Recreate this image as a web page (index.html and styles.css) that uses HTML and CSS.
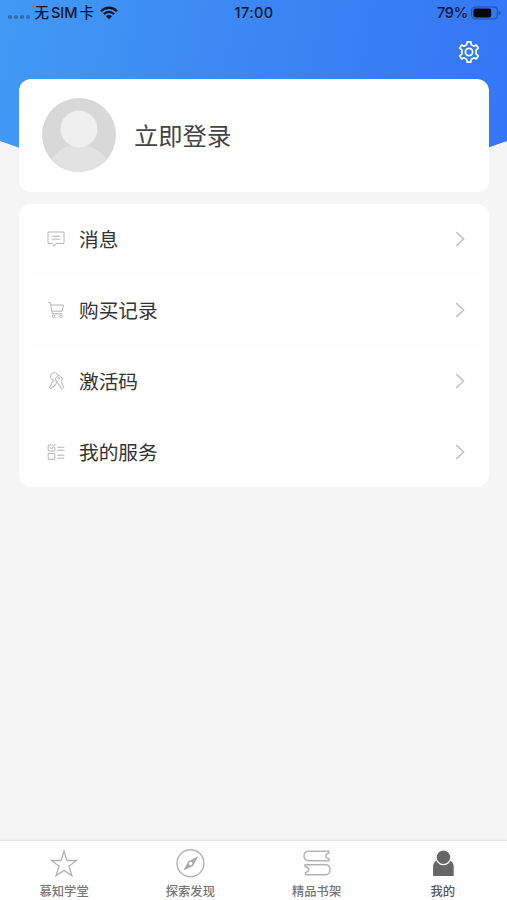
FILE: index.html
```
<!DOCTYPE html>
<html lang="zh-CN">
<head>
    <meta charset="UTF-8">
    <meta name="viewport" content="width=device-width, initial-scale=1.0">
    <title>我的</title>
    <link rel="stylesheet" href="styles.css">
</head>
<body>
    <header class="hero">
        <div class="status-bar">
            <div class="status-left">
                <span class="signal"><i></i><i></i><i></i><i></i></span>
                <span class="carrier">无<b>SIM</b>卡</span>
                <svg class="wifi" viewBox="0 0 18 14" width="18" height="14">
                    <path d="M1 5.200C5.500 .6 12.500 .6 17 5.200M3.900 8.100C6.800 5.200 11.200 5.200 14.100 8.100" fill="none" stroke="#07162d" stroke-width="2.300"/>
                    <path d="M5.900 10.200C7.800 8.500 10.200 8.500 12.100 10.200L9 13.300Z" fill="#07162d"/>
                </svg>
            </div>
            <div class="status-time">17:00</div>
            <div class="status-right">
                <span>79%</span>
                <svg width="30" height="14" viewBox="0 0 30 14">
                    <rect x=".7" y="1" width="25.600" height="12" rx="3.500" fill="none" stroke="#245293" stroke-width="1.100"/>
                    <rect x="2.500" y="2.600" width="17.700" height="8.800" rx="1.800" fill="#02060e"/>
                    <path d="M27.800 5v4q2-.6 2-2t-2-2z" fill="#245293"/>
                </svg>
            </div>
        </div>
        <div class="toolbar">
            <svg class="gear" viewBox="0 0 24 24" width="24" height="24">
                <path d="M9.700 4.700 10.200 1.800h3.600l.5 2.900q1.300.5 2.400 1.400l2.800-1 1.800 3.100-2.300 1.900q.3 1.900 0 3.800l2.300 1.900-1.800 3.100-2.800-1q-1.100.9-2.400 1.400l-.5 2.900h-3.600l-.5-2.900q-1.300-.5-2.400-1.400l-2.800 1-1.800-3.100L5 13.900q-.3-1.900 0-3.800L2.700 8.200l1.800-3.100 2.800 1q1.100-.9 2.400-1.400z"/>
                <circle cx="12" cy="12" r="3.600"/>
            </svg>
        </div>
    </header>
    <main>
        <section class="card profile">
            <svg class="avatar" viewBox="0 0 74 74" width="74" height="74">
                <defs><clipPath id="avatar-clip"><circle cx="37" cy="37" r="37"/></clipPath></defs>
                <g clip-path="url(#avatar-clip)">
                    <rect width="74" height="74" fill="#d8d8d8"/>
                    <circle cx="37" cy="79" r="32.500" fill="#e2e2e2"/>
                    <circle cx="37" cy="31" r="18.500" fill="#efefef"/>
                </g>
            </svg>
            <span class="login">立即登录</span>
        </section>
        <nav class="card menu">
            <a class="menu-item">
                <svg class="menu-icon" viewBox="0 0 18 18">
                    <path d="M2 2h14q1 0 1 1v9.500q0 1-1 1H9.200L7 16l-1.500-2.500H2q-1 0-1-1V3q0-1 1-1zM4.800 6.200h8.400M4.800 9.200h8.400"/>
                </svg>
                <span class="label">消息</span>
                <svg class="arrow" viewBox="0 0 10 16"><path d="M1.300 1.200 8.600 8l-7.300 6.800"/></svg>
            </a>
            <a class="menu-item">
                <svg class="menu-icon" viewBox="0 0 18 18">
                    <path d="M1 1.500h2.200L5.400 12.800H15M3.800 4h12.700l-1.400 6.200H5"/>
                    <circle cx="6.500" cy="15.300" r="1.300"/><circle cx="14" cy="15.300" r="1.300"/>
                </svg>
                <span class="label">购买记录</span>
                <svg class="arrow" viewBox="0 0 10 16"><path d="M1.300 1.200 8.600 8l-7.300 6.800"/></svg>
            </a>
            <a class="menu-item no-line">
                <svg class="menu-icon" viewBox="0 0 18 18">
                    <path d="M6.500 8.200A3.800 3.800 0 1 1 10.900 3.300M6.600 8 2.400 15.800l1.800 1 1.200-2 1.500.1.300-1.800 1.300-.3 1.200-2.800M9 9A3.400 3.400 0 1 1 14.300 9.500L16.800 15.400l-1.300 1.500-1.600-.9-.8-1.900-1.300-.4.100-1.500-1.300-.8-.4-1.800z"/>
                    <circle cx="11.800" cy="6.300" r=".8"/>
                </svg>
                <span class="label">激活码</span>
                <svg class="arrow" viewBox="0 0 10 16"><path d="M1.300 1.200 8.600 8l-7.300 6.800"/></svg>
            </a>
            <a class="menu-item no-line">
                <svg class="menu-icon" viewBox="0 0 18 18">
                    <path d="M7.800 4v4H1.200V2h5M2.800 4.200l1.900 2L8.300 1M1.200 10.400h6.600v6H1.200zM10.300 4.300h7M10.300 7.300h7M10.300 12.200h7M10.300 15.200h7"/>
                </svg>
                <span class="label">我的服务</span>
                <svg class="arrow" viewBox="0 0 10 16"><path d="M1.300 1.200 8.600 8l-7.300 6.800"/></svg>
            </a>
        </nav>
    </main>
    <footer class="tab-bar">
        <a class="tab">
            <svg viewBox="0 0 30 30"><path d="M15 2.200 18 11.500H27.400L19.900 17.200 22.800 26.600 15 21.300 7.200 26.600 10.100 17.200 2.600 11.500H12Z"/></svg>
            <span>慕知学堂</span>
        </a>
        <a class="tab">
            <svg viewBox="0 0 30 30">
                <circle cx="15.500" cy="14.300" r="13.500"/>
                <path class="needle" fill-rule="evenodd" d="M23.200 7.300 18.100 17 8.300 21.500 13.300 12.300ZM15.600 12.800a1.700 1.700 0 1 0 .1 0z"/>
            </svg>
            <span>探索发现</span>
        </a>
        <a class="tab">
            <svg viewBox="0 0 30 30">
                <path d="M27 2.300H7Q2 2.300 2 7t5 4.700h20v-2Q24 9.500 23.600 7q.4-2.500 3.400-3zM3 15.700h20.500q4.500 0 4.500 5t-4.500 5H3.500v-2Q6.500 23 6.800 20.700 6.500 18.200 3 17.500z"/>
            </svg>
            <span>精品书架</span>
        </a>
        <a class="tab active">
            <svg viewBox="0 0 30 30">
                <path d="M4.500 27.500V18.500q0-6.500 4.700-7.500h12.400q4.700 1 4.700 7.500v9z"/>
                <circle cx="15.400" cy="8.300" r="7.300"/>
            </svg>
            <span>我的</span>
        </a>
    </footer>
</body>
</html>
```
FILE: styles.css
```
* {
    box-sizing: border-box;
}
body {
    margin: 0;
    height: 900px;
    display: flex;
    flex-direction: column;
    overflow: hidden;
    background: #f5f5f5;
    color: #333;
    font-family: "Liberation Sans", "Noto Sans CJK SC", sans-serif;
}
svg {
    display: block;
    flex: none;
}
.hero {
    height: 178px;
    flex: none;
    background: linear-gradient(100deg, #429af4 0%, #3b86f3 50%, #3475f6 100%);
    clip-path: polygon(0 0, 100% 0, 100% 141px, 86% 166px, 50% 178px, 14% 166px, 0 141px);
}
.status-bar {
    height: 26px;
    display: grid;
    grid-template-columns: 1fr auto 1fr;
    align-items: center;
    padding: 0 6px 0 8px;
    color: #07162d;
    font-family: Inter, "Noto Sans CJK SC", sans-serif;
    font-size: 14.500px;
    font-weight: 500;
    line-height: 20px;
}
.status-left,
.status-right {
    display: flex;
    align-items: center;
}
.status-left {
    height: 24px;
}
.status-time {
    letter-spacing: 0.4px;
    margin-right: 1px;
}
.status-right {
    justify-content: flex-end;
    gap: 3px;
}
.status-right span {
    letter-spacing: -0.2px;
}
.signal {
    display: flex;
    gap: 2.500px;
    margin: 8px 4px 0 0;
}
.signal i {
    width: 3.500px;
    height: 3.500px;
    border-radius: 50%;
    background: #306db5;
}
.carrier {
    margin-left: 1px;
}
.carrier b {
    font-weight: 500;
    margin: 0 2px;
}
.wifi {
    margin-left: 6px;
}
.toolbar {
    display: flex;
    justify-content: flex-end;
    padding: 14px 26px 0 0;
}
.gear {
    fill: none;
    stroke: #fff;
    stroke-width: 1.700;
    stroke-linejoin: round;
}
main {
    flex: 1;
    margin-top: -99px;
    padding: 0 18px 0 19px;
    z-index: 1;
}
.card {
    background: #fff;
    border-radius: 12px;
}
.profile {
    height: 113px;
    display: flex;
    align-items: center;
    gap: 18px;
    padding-left: 23px;
    margin-bottom: 12px;
}
.avatar {
    margin-bottom: 1px;
}
.login {
    color: #444;
    font-size: 24.300px;
    margin-bottom: 2px;
}
.menu {
    height: 283px;
    display: flex;
    flex-direction: column;
}
.menu-item {
    flex: 1;
    display: flex;
    align-items: center;
    margin: 0 10px 0 14px;
    padding: 1px 14px 0 14px;
    border-bottom: 1px solid #fafafa;
}
.menu-item.no-line {
    border-color: transparent;
}
.menu-icon {
    width: 18px;
    height: 18px;
    fill: none;
    stroke: #b4b4b4;
}
.label {
    flex: 1;
    margin: -1px 0 0 14px;
    font-size: 19.700px;
}
.arrow {
    width: 10px;
    height: 16px;
    fill: none;
    stroke: #c4c4c4;
    stroke-width: 1.600;
}
.tab-bar {
    height: 60px;
    flex: none;
    display: grid;
    grid-template-columns: repeat(4, 1fr);
    padding: 0 1px;
    background: #fff;
    border-top: 1px solid #e5e5e5;
    box-shadow: 0 -1px 2px rgba(0, 0, 0, 0.04);
}
.tab {
    display: flex;
    flex-direction: column;
    align-items: center;
    padding-top: 8px;
    color: #777;
    font-size: 12.300px;
    font-weight: 500;
    line-height: 18px;
}
.tab svg {
    width: 30px;
    height: 30px;
    margin-bottom: 4px;
    fill: none;
    stroke: #b4b4b4;
    stroke-width: 1.400;
}
.tab .needle {
    fill: #aaa;
    stroke: none;
}
.tab.active {
    color: #555;
}
.tab.active svg {
    fill: #666;
    stroke: #fff;
    stroke-width: 1.200;
}
```
